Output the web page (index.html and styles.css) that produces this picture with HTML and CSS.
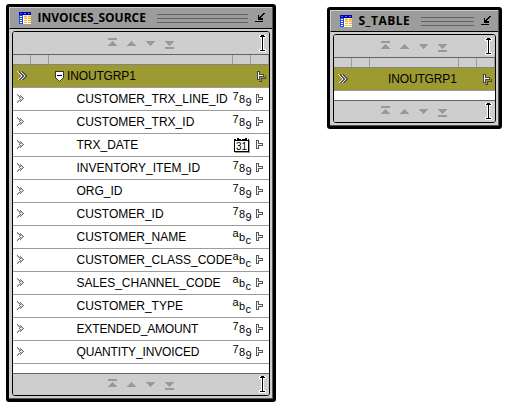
FILE: index.html
```
<!DOCTYPE html>
<html lang="en">
<head>
<meta charset="utf-8">
<title>Mapping canvas</title>
<link rel="stylesheet" href="styles.css">
</head>
<body>
<svg class="defs" width="0" height="0" aria-hidden="true">
  <symbol id="table" viewBox="0 0 12 12">
    <path fill="#fff" d="M0 0h12v12H0z"/><path fill="#0000b8" d="M0 0h12v3H0z"/><path fill="#3970ff" d="M1 1h2v1H1zM5 1h2v1H5zM9 1h2v1H9z"/>
    <path fill="#2049e0" d="M0 3h4v9H0z"/><path fill="#fff" d="M1 4h2v1H1zM1 6h2v1H1zM1 8h2v1H1zM1 10h2v1H1zM4 3h1v9H4zM8 3h1v9H8z"/>
    <path fill="#ffad21" d="M5 4h3v1H5zM9 4h3v1H9zM5 6h3v1H5zM9 6h3v1H9zM5 8h3v1H5zM9 8h3v1H9zM5 10h3v1H5zM9 10h3v1H9z"/>
    <path fill="#ffd591" d="M5 3h3v1H5zM9 3h3v1H9zM5 5h3v1H5zM9 5h3v1H9z"/>
  </symbol>
  <symbol id="restore" viewBox="0 0 11 10">
    <path fill="#000" d="M0 8h8v1H0zM3 2h1v5H3zM4 5h4v1H4zM3 6h5v1H3zM4 4h2v1H4zM5 3h2v1H5zM6 2h2v1H6zM7 1h2v1H7zM8 0h2v1H8z"/>
  </symbol>
  <symbol id="nav" viewBox="0 0 67 11">
    <path fill="#999" d="M0 0h9v2H0zM4 3h1v1h1v1h1v1h1v1h1v1H0V7h1V6h1V5h1V4h1zM23 3h1v1h1v1h1v1h1v1h1v1h-9V7h1V6h1V5h1V4h1zM38 3h9v1h-1v1h-1v1h-1v1h-1v1h-1V7h-1V6h-1V5h-1V4h-1zM57 3h9v1h-1v1h-1v1h-1v1h-1v1h-1V7h-1V6h-1V5h-1V4h-1zM57 9h9v2h-9z"/>
  </symbol>
  <symbol id="caret" viewBox="0 0 7 17">
    <path fill="#fff" d="M0 0h7v3H5v11h2v3H0v-3h2V3H0z"/><path fill="#000" d="M2 0h3v1H2zM1 1h5v1H1zM3 2h1v13H3zM1 15h5v1H1z"/>
  </symbol>
  <symbol id="chev" viewBox="0 0 7 9">
    <path fill="#777" d="M0 0h1v1H0zM1 1h1v1H1zM2 2h1v1H2zM3 3h1v1H3zM2 4h1v1H2zM3 5h1v1H3zM2 6h1v1H2zM1 7h1v1H1zM0 8h1v1H0zM3 1h1v1H3zM4 2h1v1H4zM5 3h1v1H5zM6 4h1v1H6zM5 5h1v1H5zM4 6h1v1H4zM3 7h1v1H3z"/>
    <path fill="#bbb" d="M0 1h1v1H0zM1 2h1v1H1zM2 3h1v1H2zM1 6h1v1H1zM0 7h1v1H0zM3 2h1v1H3zM4 3h1v1H4zM5 4h1v1H5zM4 5h1v1H4zM3 6h1v1H3z"/>
  </symbol>
  <symbol id="chev-group" viewBox="0 0 10 10">
    <path fill="none" stroke="#555" stroke-width="2" d="M2 1l4 4-4 4M5 1l4 4-4 4"/><path fill="none" stroke="#eee" stroke-width="1" d="M.5 .5L5 5 .5 9.5M4 1l4 4-4 4"/>
  </symbol>
  <symbol id="expand" viewBox="0 0 9 11">
    <path fill="#fff" stroke="#333" d="M.5 .5h8v6l-4 4-4-4z"/><path fill="#000" d="M2 4h5v1H2z"/>
  </symbol>
  <symbol id="port" viewBox="0 0 7 9">
    <path fill="#555" d="M0 0h3v3h4v3H3v3H0z"/><path fill="#fff" d="M1 1h1v3h4v1H2v3H1z"/>
  </symbol>
  <symbol id="port-group" viewBox="0 0 9 11">
    <path fill="#444" d="M0 0h3v3h4v3H3v3H0zM8 5h1v3H5v3H2v-1h2V7h4z"/><path fill="#fff" d="M1 1h1v3h4v1H2v3H1z"/>
  </symbol>
  <symbol id="date" viewBox="0 0 16 15">
    <path fill="#999" d="M1 2h15v13H1z"/><path fill="#000" d="M0 1h15v13H0zM3 0h2v1H3zM11 0h2v1h-2z"/><path fill="#fff" d="M1 3h13v10H1zM2 1h1v1H2zM7 1h1v1H7zM13 1h1v1h-1z"/>
  </symbol>
</svg>

<section class="panel source">
  <header class="title"><svg class="i-table"><use href="#table"/></svg><h2>INVOICES_SOURCE</h2><span class="grip"></span><svg class="i-restore"><use href="#restore"/></svg></header>
  <div class="frame">
    <div class="bar"><svg class="i-nav"><use href="#nav"/></svg><svg class="i-caret"><use href="#caret"/></svg></div>
    <div class="cols"><i></i><i></i><i></i><i></i><i></i></div>
    <div class="row group"><svg class="i-chevg"><use href="#chev-group"/></svg><svg class="i-expand"><use href="#expand"/></svg><span class="name">INOUTGRP1</span><svg class="i-portg"><use href="#port-group"/></svg></div>
    <div class="row"><svg class="i-chev"><use href="#chev"/></svg><span class="name">CUSTOMER_TRX_LINE_ID</span><span class="type num"><b>7</b><b>8</b><b>9</b></span><svg class="i-port"><use href="#port"/></svg></div>
    <div class="row"><svg class="i-chev"><use href="#chev"/></svg><span class="name">CUSTOMER_TRX_ID</span><span class="type num"><b>7</b><b>8</b><b>9</b></span><svg class="i-port"><use href="#port"/></svg></div>
    <div class="row"><svg class="i-chev"><use href="#chev"/></svg><span class="name">TRX_DATE</span><svg class="i-date"><use href="#date"/><text class="day" x="2" y="11.5">31</text></svg><svg class="i-port"><use href="#port"/></svg></div>
    <div class="row"><svg class="i-chev"><use href="#chev"/></svg><span class="name">INVENTORY_ITEM_ID</span><span class="type num"><b>7</b><b>8</b><b>9</b></span><svg class="i-port"><use href="#port"/></svg></div>
    <div class="row"><svg class="i-chev"><use href="#chev"/></svg><span class="name">ORG_ID</span><span class="type num"><b>7</b><b>8</b><b>9</b></span><svg class="i-port"><use href="#port"/></svg></div>
    <div class="row"><svg class="i-chev"><use href="#chev"/></svg><span class="name">CUSTOMER_ID</span><span class="type num"><b>7</b><b>8</b><b>9</b></span><svg class="i-port"><use href="#port"/></svg></div>
    <div class="row"><svg class="i-chev"><use href="#chev"/></svg><span class="name">CUSTOMER_NAME</span><span class="type abc"><b>a</b><b>b</b><b>c</b></span><svg class="i-port"><use href="#port"/></svg></div>
    <div class="row"><svg class="i-chev"><use href="#chev"/></svg><span class="name">CUSTOMER_CLASS_CODE</span><span class="type abc"><b>a</b><b>b</b><b>c</b></span><svg class="i-port"><use href="#port"/></svg></div>
    <div class="row"><svg class="i-chev"><use href="#chev"/></svg><span class="name">SALES_CHANNEL_CODE</span><span class="type abc"><b>a</b><b>b</b><b>c</b></span><svg class="i-port"><use href="#port"/></svg></div>
    <div class="row"><svg class="i-chev"><use href="#chev"/></svg><span class="name">CUSTOMER_TYPE</span><span class="type abc"><b>a</b><b>b</b><b>c</b></span><svg class="i-port"><use href="#port"/></svg></div>
    <div class="row"><svg class="i-chev"><use href="#chev"/></svg><span class="name narrow">EXTENDED_AMOUNT</span><span class="type num"><b>7</b><b>8</b><b>9</b></span><svg class="i-port"><use href="#port"/></svg></div>
    <div class="row"><svg class="i-chev"><use href="#chev"/></svg><span class="name narrow">QUANTITY_INVOICED</span><span class="type num"><b>7</b><b>8</b><b>9</b></span><svg class="i-port"><use href="#port"/></svg></div>
    <div class="spare"></div>
    <div class="bar foot"><svg class="i-nav"><use href="#nav"/></svg><svg class="i-caret"><use href="#caret"/></svg></div>
  </div>
</section>

<section class="panel target">
  <header class="title"><svg class="i-table"><use href="#table"/></svg><h2>S_TABLE</h2><span class="grip"></span><svg class="i-restore"><use href="#restore"/></svg></header>
  <div class="frame">
    <div class="bar"><svg class="i-nav"><use href="#nav"/></svg><svg class="i-caret"><use href="#caret"/></svg></div>
    <div class="cols"><i></i><i></i><i></i><i></i><i></i></div>
    <div class="row group"><svg class="i-chevg"><use href="#chev-group"/></svg><span class="name">INOUTGRP1</span><svg class="i-portg"><use href="#port-group"/></svg></div>
    <div class="spare"></div>
    <div class="bar foot"><svg class="i-nav"><use href="#nav"/></svg><svg class="i-caret"><use href="#caret"/></svg></div>
  </div>
</section>
</body>
</html>
```
FILE: styles.css
```
* { box-sizing: border-box; }
body { margin: 0; width: 518px; height: 408px; overflow: hidden; position: relative; background: #fff; color: #000; font-family: "Liberation Sans", Arial, sans-serif; }
svg { display: block; flex: none; shape-rendering: crispEdges; }
.defs { position: absolute; }

.panel { position: absolute; display: flex; flex-direction: column; border: 3px solid #000; border-radius: 3px; background: #cecece; box-shadow: inset -1px -1px #555; }
.source { left: 6px; top: 4px; width: 270px; height: 398px; }
.target { left: 327px; top: 7px; width: 175px; height: 122px; }

.title { height: 22px; flex: none; display: flex; align-items: center; margin-right: 1px; padding: 0 6px 0 9px; background: #9c9c9c; border-top: 1px solid #cecece; border-left: 1px solid #cecece; border-bottom: 1px solid #000; }
.title h2 { margin: 0 0 0 6.5px; font: bold 12px/20px "Open Sans", "Liberation Sans", sans-serif; white-space: nowrap; }
.source h2 { width: 108.5px; }
.target h2 { width: 51.5px; letter-spacing: 0.5px; }
.grip { flex: 1; height: 9px; margin: 0 7px 0 11px; border-top: 1px solid #636363; border-bottom: 1px solid #636363; background: linear-gradient(#636363, #636363) 0 3px / 100% 1px no-repeat; }
.i-table { width: 12px; height: 12px; }
.i-restore { width: 11px; height: 10px; }

.frame { flex: 1; display: flex; flex-direction: column; margin: 2px 3px 3px; border: 1px solid #000; border-radius: 3px; overflow: hidden; background: #fff; }
.bar { height: 23px; flex: none; display: flex; justify-content: space-between; padding: 3px 3px 0 95px; background: #cecece; border-bottom: 1px solid #636363; }
.target .bar { padding-left: 47px; }
.bar.foot { height: 22px; border-bottom: 0; border-top: 1px solid #636363; padding-top: 2px; }
.spare { flex: 1; }
.i-nav { width: 67px; height: 11px; margin-top: 3px; }
.i-caret { width: 7px; height: 17px; }
.cols { height: 10px; flex: none; display: grid; grid-template-columns: 18px 18px 1fr 18px 18px; background: #cecece; border-bottom: 1px solid #848484; }
.cols i { border-right: 1px solid #9c9c9c; }

.row { height: 23px; flex: none; display: flex; align-items: center; border-bottom: 1px solid #9c9c9c; padding: 0 6px 0 4px; }
.row.group { background: #9c9a31; padding-right: 3px; }
.name { flex: none; font-size: 12px; line-height: 22px; width: 156px; margin-left: 52.5px; white-space: nowrap; }
.narrow { letter-spacing: -0.15px; }
.group .name { flex: 1; margin-left: 0; letter-spacing: -0.15px; }
.target .group .name { margin-left: 40px; }
.i-chev { width: 7px; height: 9px; margin-bottom: 1px; }
.i-chevg { width: 10px; height: 10px; }
.i-expand { width: 9px; height: 11px; margin: 0 3px 0 28px; }
.i-port { width: 7px; height: 9px; margin: 0 0 1px auto; }
.i-portg { width: 9px; height: 11px; }
.i-date { width: 16px; height: 15px; margin-left: 1.5px; }
.day { font: 10px "Liberation Sans", sans-serif; }
.type { display: flex; height: 22px; font-size: 11px; line-height: 12px; }
.type b { font-weight: normal; width: 6.5px; }
.type b:nth-child(1) { margin-top: 2px; }
.type b:nth-child(2) { margin-top: 5px; }
.type b:nth-child(3) { margin-top: 8px; }
.abc b:nth-child(1) { margin-top: 1px; }
```
